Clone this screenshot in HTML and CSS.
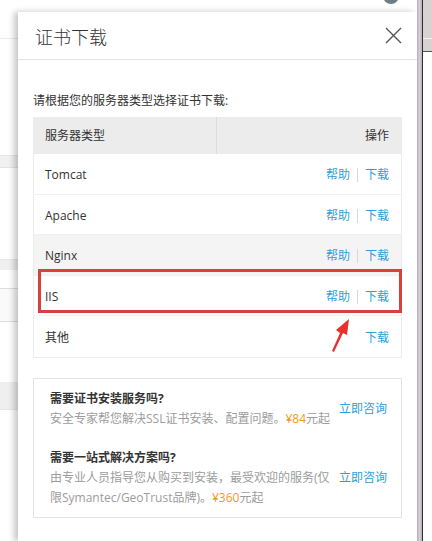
FILE: index.html
```html
<!DOCTYPE html>
<html lang="zh-CN">
<head>
<meta charset="utf-8">
<title>证书下载</title>
<link rel="stylesheet" href="styles.css">
</head>
<body>
<div class="screen">
  <div class="bg-left">
    <div class="bl-a"></div>
    <div class="bl-b"></div>
    <div class="bl-c"></div>
    <div class="bl-d"></div>
    <div class="bl-e"></div>
    <div class="bl-f"></div>
    <div class="bl-g"></div>
  </div>

  <div class="modal">
    <div class="modal-head">
      <span class="modal-title">证书下载</span>
      <svg class="close" width="17" height="17" viewBox="0 0 17 17"><path d="M1 1 L16 16 M16 1 L1 16" stroke="#555" stroke-width="1.4" fill="none"/></svg>
    </div>
    <div class="modal-body">
      <p class="intro">请根据您的服务器类型选择证书下载:</p>
      <div class="table-wrap">
        <div class="table">
          <div class="row head">
            <div class="c-name">服务器类型</div>
            <div class="c-ops">操作</div>
          </div>
          <div class="row"><div class="c-name">Tomcat</div><div class="c-ops"><a>帮助</a><i class="sep"></i><a>下载</a></div></div>
          <div class="row"><div class="c-name">Apache</div><div class="c-ops"><a>帮助</a><i class="sep"></i><a>下载</a></div></div>
          <div class="row alt"><div class="c-name">Nginx</div><div class="c-ops"><a>帮助</a><i class="sep"></i><a>下载</a></div></div>
          <div class="row"><div class="c-name">IIS</div><div class="c-ops"><a>帮助</a><i class="sep"></i><a>下载</a></div></div>
          <div class="row last"><div class="c-name">其他</div><div class="c-ops"><a>下载</a></div></div>
        </div>
        <div class="highlight"></div>
        <svg class="arrow" width="24" height="36" viewBox="0 0 24 36"><polygon points="2,35 10,17 6,14 19,3 17,19 13,17 4,36" fill="#e8312f"/></svg>
      </div>

      <div class="info">
        <div class="info-item">
          <div class="info-text">
            <div class="info-title">需要证书安装服务吗?</div>
            <div class="info-desc">安全专家帮您解决SSL证书安装、配置问题。<span class="price">¥84</span>元起</div>
          </div>
          <a class="consult">立即咨询</a>
        </div>
        <div class="info-item">
          <div class="info-text">
            <div class="info-title">需要一站式解决方案吗?</div>
            <div class="info-desc">由专业人员指导您从购买到安装，最受欢迎的服务(仅限Symantec/GeoTrust品牌)。<span class="price">¥360</span>元起</div>
          </div>
          <a class="consult">立即咨询</a>
        </div>
      </div>
    </div>
  </div>

  <div class="bg-strip"></div>
  <div class="bg-line"></div>
  <div class="bg-right">
    <div class="br-top"></div>
    <div class="br-top2"></div>
  </div>
  <div class="avatar"></div>
</div>
</body>
</html>
```

FILE: styles.css
```css
* { box-sizing: border-box; }
html, body { margin: 0; padding: 0; background: #fff; }
body {
  width: 432px;
  height: 541px;
  overflow: hidden;
  font-family: "Open Sans", "Noto Sans CJK SC", sans-serif;
  font-size: 12px;
  color: #333;
}
.screen {
  position: relative;
  display: grid;
  grid-template-columns: 18px 399px 5px 1px 9px;
  height: 541px;
}

/* background page strip on the left */
.bg-left { display: flex; flex-direction: column; background: #fff; }
.bl-a { height: 39px; border-bottom: 1px solid #ececec; }
.bl-b { height: 117px; border-bottom: 1px solid #e6e6e6; }
.bl-c { height: 12px; background: #f1f1f1; border-bottom: 1px solid #e4e4e4; }
.bl-d { height: 92px; border-bottom: 1px solid #e8e8e8; }
.bl-e { height: 10px; background: #f0f0f0; }
.bl-f { height: 34px; border-top: 1px solid #ddd; border-bottom: 1px solid #ddd; background: #fafafa; margin-top: 18px; }
.bl-g { height: 28px; background: #efefef; margin-top: 60px; border-bottom: 1px solid #e6e6e6; }

/* modal */
.modal {
  margin-top: 12px;
  background: #fff;
  box-shadow: -4px 0 6px rgba(0, 0, 0, 0.22);
  position: relative;
  z-index: 1;
}
.modal-head {
  height: 48px;
  border-bottom: 1px solid #e3e3e3;
  display: flex;
  align-items: center;
  justify-content: space-between;
  padding: 0 15px 0 17px;
}
.modal-title { font-size: 18px; line-height: 24px; color: #333; font-family: "Noto Sans CJK SC", sans-serif; font-weight: 300; }
.close { display: block; }

.modal-body { padding: 0 15px; }
.intro { margin: 33px 0 8px; line-height: 16px; color: #333; }

.table-wrap { position: relative; }
.table { border: 1px solid #ececec; border-top: 0; }
.row {
  display: flex;
  align-items: center;
  height: 40.6px;
  padding-top: 3px;
  border-bottom: 1px solid #f0f0f0;
  line-height: 16px;
}
.row.last { border-bottom: 0; }
.row.alt { background: #f4f4f4; }
.row.head { height: 37px; padding-top: 0; background: #ececec; border-bottom: 0; }
.c-name { width: 183px; padding-left: 11px; height: 100%; display: flex; align-items: center; }
.row.head .c-name { border-right: 1px solid #dcdcdc; }
.c-ops { flex: 1; display: flex; justify-content: flex-end; align-items: center; padding-right: 12px; }
.c-ops a { color: #2f9fd8; }
.sep { display: inline-block; width: 1px; height: 14px; background: #d8d8d8; margin: 0 7px; }

.highlight {
  position: absolute;
  left: 5px;
  top: 152px;
  width: 364px;
  height: 44px;
  border: 3px solid #d8403e;
}
.arrow { position: absolute; left: 297px; top: 199px; }

.info {
  margin-top: 20px;
  border: 1px solid #e3e3e3;
  padding: 10px 16px 9px;
  display: flex;
  flex-direction: column;
  gap: 19px;
}
.info-item { display: flex; align-items: center; }
.info-text { width: 284px; flex-shrink: 0; margin-right: 5px; }
.info-title { font-weight: bold; line-height: 20px; color: #333; }
.info-desc { line-height: 20px; color: #9c9c9c; }
.price { color: #f19a16; }
.consult { color: #2f9fd8; line-height: 20px; white-space: nowrap; flex-shrink: 0; }

/* right side background */
.bg-strip { background: linear-gradient(to right, #bcaec2, #d8cfdc 50%, #bcaec2); }
.bg-line { background: #2e2e2e; }
.bg-right { background: #fff; display: flex; flex-direction: column; }
.br-top { height: 39px; background: #d6d3d0; border-bottom: 1px solid #f2f2f2; }
.br-top2 { height: 13px; background: #d6d3d0; border-bottom: 1px solid #555; }

.avatar {
  position: absolute;
  left: 383px;
  top: -12px;
  width: 16px;
  height: 16px;
  border-radius: 50%;
  background: #6e7d86;
}
```
